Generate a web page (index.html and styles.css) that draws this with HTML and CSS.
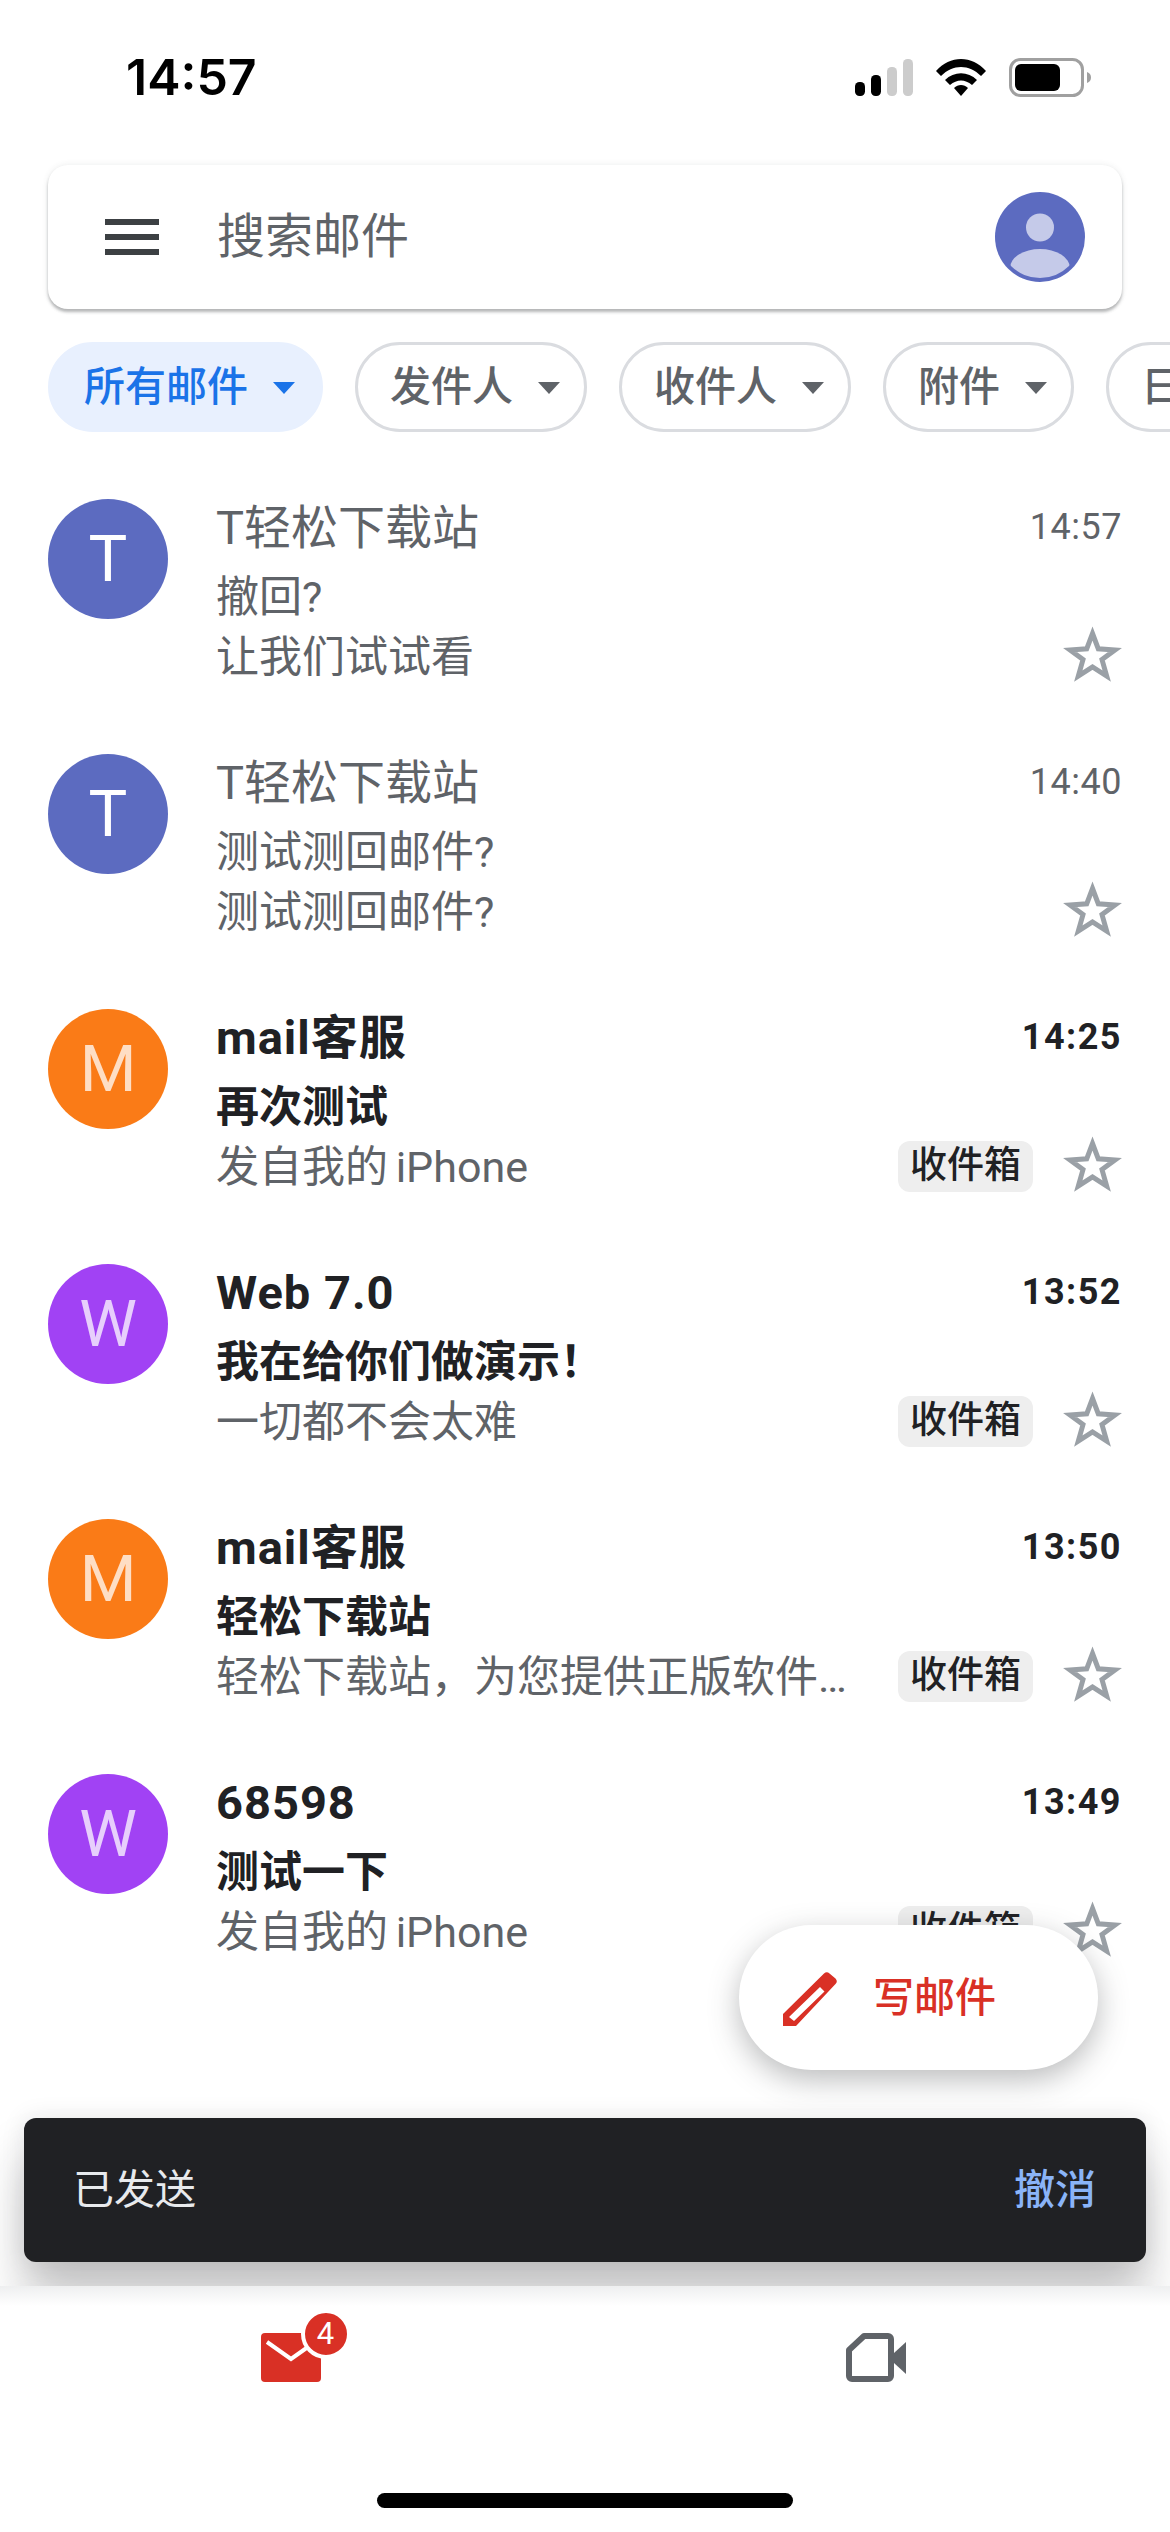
FILE: index.html
```html
<!DOCTYPE html>
<html lang="zh-CN">
  <head>
    <meta charset="UTF-8">
    <meta name="viewport" content="width=device-width, initial-scale=1.0">
    <title>Gmail</title>
    <link rel="stylesheet" href="styles.css">
  </head>
  <body>
    <div class="status-bar">
      <span class="clock">14:57</span>
      <div class="status-icons">
        <svg width="58" height="37" viewBox="0 0 58 37">
          <rect x="0" y="23" width="10" height="14" rx="4.5" fill="#000"/>
          <rect x="16" y="16" width="10" height="21" rx="4.5" fill="#000"/>
          <rect x="32" y="8" width="10" height="29" rx="4.5" fill="#ccc"/>
          <rect x="48" y="0" width="10" height="37" rx="4.5" fill="#ccc"/>
        </svg>
        <svg width="50" height="37" viewBox="0 0 50 37">
          <path d="M0 12 C14 -4 36 -4 50 12 L45 17 C33 5 17 5 5 17 Z" fill="#000"/>
          <path d="M9 21 C18 12 32 12 41 21 L36 26 C29 20 21 20 14 26 Z" fill="#000"/>
          <path d="M18 29 C22 25 28 25 32 29 L25 37 Z" fill="#000"/>
        </svg>
        <svg width="82" height="39" viewBox="0 0 82 39">
          <rect x="1.5" y="1.5" width="72" height="36" rx="10" fill="#fff" stroke="#a0a0a0" stroke-width="3"/>
          <rect x="6" y="6" width="45" height="27" rx="6" fill="#000"/>
          <path d="M78 14 C81 15 82 17 82 19.5 C82 22 81 24 78 25 Z" fill="#a0a0a0"/>
        </svg>
      </div>
    </div>

    <div class="search-bar">
      <div class="menu-icon"><i></i><i></i><i></i></div>
      <span class="search-text">搜索邮件</span>
      <svg class="account" width="90" height="90" viewBox="0 0 90 90">
        <defs>
          <clipPath id="inner"><circle cx="45" cy="45" r="41"/></clipPath>
        </defs>
        <circle cx="45" cy="45" r="45" fill="#5c6bc0"/>
        <circle cx="45" cy="35.5" r="14" fill="#c5cae9"/>
        <ellipse cx="45" cy="76" rx="30" ry="19" fill="#c5cae9" clip-path="url(#inner)"/>
      </svg>
    </div>

    <div class="chips">
      <div class="chip active">所有邮件<i class="caret"></i></div>
      <div class="chip">发件人<i class="caret"></i></div>
      <div class="chip">收件人<i class="caret"></i></div>
      <div class="chip">附件<i class="caret"></i></div>
      <div class="chip">日期<i class="caret"></i></div>
    </div>

    <div class="mail-list">
      <div class="mail">
        <div class="avatar indigo">T</div>
        <div class="mail-body">
          <div class="line top"><span class="sender">T轻松下载站</span><span class="time">14:57</span></div>
          <div class="line subject">撤回?</div>
          <div class="line bottom">
            <span class="snippet">让我们试试看</span>
            <svg class="star" viewBox="0 0 59 56"><path d="M29.5 7.5 L35.3 22.8 L52 24 L39 33.6 L43.7 50 L29.5 41 L15.3 50 L20 33.6 L7 24 L23.7 22.8 Z"/></svg>
          </div>
        </div>
      </div>
      <div class="mail">
        <div class="avatar indigo">T</div>
        <div class="mail-body">
          <div class="line top"><span class="sender">T轻松下载站</span><span class="time">14:40</span></div>
          <div class="line subject">测试测回邮件?</div>
          <div class="line bottom">
            <span class="snippet">测试测回邮件?</span>
            <svg class="star" viewBox="0 0 59 56"><path d="M29.5 7.5 L35.3 22.8 L52 24 L39 33.6 L43.7 50 L29.5 41 L15.3 50 L20 33.6 L7 24 L23.7 22.8 Z"/></svg>
          </div>
        </div>
      </div>
      <div class="mail unread">
        <div class="avatar orange">M</div>
        <div class="mail-body">
          <div class="line top"><span class="sender">mail客服</span><span class="time">14:25</span></div>
          <div class="line subject">再次测试</div>
          <div class="line bottom">
            <span class="snippet">发自我的 iPhone</span>
            <span class="label">收件箱</span>
            <svg class="star" viewBox="0 0 59 56"><path d="M29.5 7.5 L35.3 22.8 L52 24 L39 33.6 L43.7 50 L29.5 41 L15.3 50 L20 33.6 L7 24 L23.7 22.8 Z"/></svg>
          </div>
        </div>
      </div>
      <div class="mail unread">
        <div class="avatar purple">W</div>
        <div class="mail-body">
          <div class="line top"><span class="sender">Web 7.0</span><span class="time">13:52</span></div>
          <div class="line subject">我在给你们做演示！</div>
          <div class="line bottom">
            <span class="snippet">一切都不会太难</span>
            <span class="label">收件箱</span>
            <svg class="star" viewBox="0 0 59 56"><path d="M29.5 7.5 L35.3 22.8 L52 24 L39 33.6 L43.7 50 L29.5 41 L15.3 50 L20 33.6 L7 24 L23.7 22.8 Z"/></svg>
          </div>
        </div>
      </div>
      <div class="mail unread">
        <div class="avatar orange">M</div>
        <div class="mail-body">
          <div class="line top"><span class="sender">mail客服</span><span class="time">13:50</span></div>
          <div class="line subject">轻松下载站</div>
          <div class="line bottom">
            <span class="snippet">轻松下载站，为您提供正版软件…</span>
            <span class="label">收件箱</span>
            <svg class="star" viewBox="0 0 59 56"><path d="M29.5 7.5 L35.3 22.8 L52 24 L39 33.6 L43.7 50 L29.5 41 L15.3 50 L20 33.6 L7 24 L23.7 22.8 Z"/></svg>
          </div>
        </div>
      </div>
      <div class="mail unread">
        <div class="avatar purple">W</div>
        <div class="mail-body">
          <div class="line top"><span class="sender">68598</span><span class="time">13:49</span></div>
          <div class="line subject">测试一下</div>
          <div class="line bottom">
            <span class="snippet">发自我的 iPhone</span>
            <span class="label">收件箱</span>
            <svg class="star" viewBox="0 0 59 56"><path d="M29.5 7.5 L35.3 22.8 L52 24 L39 33.6 L43.7 50 L29.5 41 L15.3 50 L20 33.6 L7 24 L23.7 22.8 Z"/></svg>
          </div>
        </div>
      </div>
    </div>

    <div class="compose">
      <svg width="54" height="54" viewBox="0 0 54 54">
        <path d="M41 1.5 a4 4 0 0 1 5.5 0 L52.5 6.5 a4 4 0 0 1 0 5.5 L13 54 H0 V42 Z M37 15 L41.5 19.5 L11 49 L6 45 Z" fill="#d93025" fill-rule="evenodd"/>
      </svg>
      <span>写邮件</span>
    </div>

    <div class="snackbar">
      <span>已发送</span>
      <span class="undo">撤消</span>
    </div>

    <div class="bottom-nav">
      <div class="nav-item">
        <div class="mail-icon">
          <svg width="60" height="49" viewBox="0 0 60 49">
            <rect width="60" height="49" rx="4" fill="#d93025"/>
            <path d="M6 9 L30 26 L54 9" fill="none" stroke="#fff" stroke-width="4"/>
          </svg>
          <span class="badge">4</span>
        </div>
      </div>
      <div class="nav-item">
        <svg width="60" height="49" viewBox="0 0 60 49">
          <path d="M18 3 H42 a3 3 0 0 1 3 3 V43 a3 3 0 0 1 -3 3 H6 a3 3 0 0 1 -3 -3 V17 Z" fill="none" stroke="#5f6368" stroke-width="6" stroke-linejoin="round"/>
          <path d="M48 20 L60 9 V41 L48 30 Z" fill="#5f6368"/>
        </svg>
      </div>
      <div class="home-bar"></div>
    </div>
  </body>
</html>
```

FILE: styles.css
```css
* {
  box-sizing: border-box;
}
body {
  margin: 0;
  width: 1170px;
  height: 2532px;
  position: relative;
  overflow: hidden;
  background: #fff;
  color: #5f6368;
  font-family: Roboto, "Noto Sans CJK SC", sans-serif;
  line-height: 1.2;
}

/* status bar */
.status-bar {
  height: 165px;
  padding: 52px 79px 0 126px;
  display: flex;
  justify-content: space-between;
  align-items: flex-start;
}
.clock {
  font-family: Inter, sans-serif;
  font-size: 50px;
  font-weight: 600;
  line-height: 50px;
  color: #000;
}
.status-icons {
  display: flex;
  align-items: center;
  gap: 23px;
  padding-top: 6px;
}

/* search */
.search-bar {
  height: 144px;
  margin: 0 48px;
  padding: 0 37px 0 57px;
  display: flex;
  align-items: center;
  background: #fff;
  border-radius: 20px;
  box-shadow: 0 3px 3px rgba(60, 64, 67, 0.35), 0 0 6px rgba(60, 64, 67, 0.1);
}
.menu-icon {
  width: 54px;
  display: flex;
  flex-direction: column;
  gap: 9px;
}
.menu-icon i {
  height: 6px;
  background: #3c4043;
}
.search-text {
  flex: 1;
  margin-left: 58px;
  font-size: 48px;
}

/* filter chips */
.chips {
  margin-top: 33px;
  padding-left: 48px;
  display: flex;
  gap: 32px;
  height: 90px;
  overflow: hidden;
}
.chip {
  flex: none;
  height: 90px;
  padding: 2px 24px 0 32px;
  display: flex;
  align-items: center;
  gap: 25px;
  border: 3px solid #dadce0;
  border-radius: 45px;
  font-size: 41px;
  font-weight: 500;
}
.chip.active {
  padding: 2px 25px 0 33px;
  border-color: #e8f0fe;
  background: #e8f0fe;
  color: #1a73e8;
}
.caret {
  width: 0;
  height: 0;
  border-left: 11px solid transparent;
  border-right: 11px solid transparent;
  border-top: 12px solid #5f6368;
}
.active .caret {
  border-top-color: #1a73e8;
}

/* mail rows */
.mail-list {
  padding-top: 67px;
}
.mail {
  height: 255px;
  padding: 0 48px;
  display: flex;
  gap: 48px;
}
.avatar {
  flex: none;
  width: 120px;
  height: 120px;
  border-radius: 50%;
  display: flex;
  align-items: center;
  justify-content: center;
  font-size: 65px;
  color: rgba(255, 255, 255, 0.75);
}
.indigo {
  background: #5c6bc0;
  color: #fff;
}
.orange {
  background: #fa7b17;
}
.purple {
  background: #a142f4;
}
.mail-body {
  flex: 1;
  min-width: 0;
}
.line {
  display: flex;
  align-items: center;
}
.top {
  height: 56px;
  margin-top: 1px;
  justify-content: space-between;
}
.sender {
  font-size: 47px;
}
.time {
  font-size: 36px;
  letter-spacing: 0.5px;
}
.subject {
  height: 56px;
  margin-top: 14px;
  font-size: 43px;
}
.bottom {
  height: 56px;
  margin-top: 4px;
  font-size: 43px;
}
.snippet {
  flex: 1;
  min-width: 0;
  white-space: nowrap;
  word-spacing: -3px;
}
.label {
  flex: none;
  margin: 0 0 3px 24px;
  width: 135px;
  height: 51px;
  line-height: 50px;
  text-align: center;
  background: #eee;
  border-radius: 12px;
  color: #202124;
  font-size: 37px;
  font-weight: 500;
}
.star {
  flex: none;
  width: 59px;
  height: 56px;
  margin: 0 0 8px 30px;
  fill: none;
  stroke: #9aa0a6;
  stroke-width: 5;
  stroke-miterlimit: 10;
}
.unread .sender {
  font-weight: 700;
  letter-spacing: 1px;
  color: #202124;
}
.unread .time {
  font-weight: 700;
  letter-spacing: 1.5px;
  color: #202124;
}
.unread .subject {
  font-weight: 700;
  color: #202124;
}

/* floating things */
.compose {
  position: absolute;
  left: 739px;
  top: 1925px;
  width: 359px;
  height: 145px;
  padding: 2px 0 0 44px;
  display: flex;
  align-items: center;
  gap: 36px;
  background: #fff;
  border-radius: 73px;
  box-shadow: 0 10px 30px rgba(60, 64, 67, 0.35);
  color: #d93025;
  font-size: 41px;
  font-weight: 500;
}
.snackbar {
  position: absolute;
  left: 24px;
  top: 2118px;
  width: 1122px;
  height: 144px;
  padding: 2px 50px 0 49px;
  display: flex;
  justify-content: space-between;
  align-items: center;
  background: #202124;
  border-radius: 12px;
  box-shadow: 0 40px 48px rgba(32, 33, 36, 0.25), 0 0 24px rgba(32, 33, 36, 0.1);
  color: #e8eaed;
  font-size: 41px;
}
.undo {
  color: #8ab4f8;
  font-weight: 500;
}

/* bottom nav */
.bottom-nav {
  position: absolute;
  left: 0;
  top: 2286px;
  width: 1170px;
  height: 246px;
  padding-top: 47px;
  display: flex;
  align-items: flex-start;
  background: linear-gradient(#eeeff0, #fff 20px);
}
.nav-item {
  width: 585px;
  padding-right: 4px;
  display: flex;
  justify-content: center;
}
.mail-icon {
  position: relative;
  width: 60px;
  height: 49px;
}
.mail-icon svg {
  display: block;
}
.badge {
  position: absolute;
  left: 40px;
  top: -24px;
  width: 50px;
  height: 50px;
  border: 4px solid #fff;
  border-radius: 50%;
  background: #d93025;
  color: #fff;
  font-size: 31px;
  line-height: 42px;
  text-align: center;
}
.home-bar {
  position: absolute;
  left: 377px;
  top: 207px;
  width: 416px;
  height: 15px;
  border-radius: 8px;
  background: #000;
}
```
